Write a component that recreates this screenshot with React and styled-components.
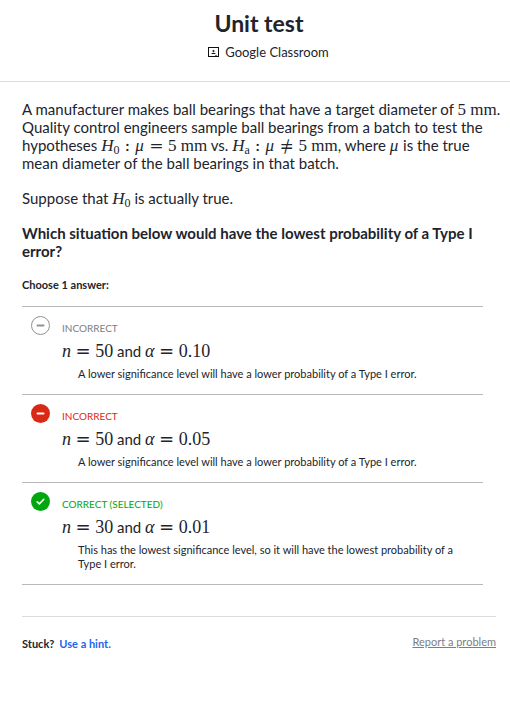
import React from "react";
import styled, { createGlobalStyle, css } from "styled-components";

const GlobalStyle = createGlobalStyle`
  *, *::before, *::after { box-sizing: border-box; }
  body {
    margin: 0;
    background: #fff;
    color: #21242c;
    font-family: Lato, "Noto Sans", sans-serif;
    font-size: 15px;
    line-height: 18px;
  }
`;

const Header = styled.header`
  display: flex;
  flex-direction: column;
  align-items: center;
  gap: 5px;
  padding: 9px 0 20px 8px;
  border-bottom: 1px solid #dbdcdd;
`;

const Title = styled.h1`
  margin: 0;
  font-size: 23px;
  line-height: 29px;
  font-weight: 700;
`;

const ClassroomButton = styled.button`
  display: flex;
  align-items: center;
  gap: 6px;
  padding: 0 0 0 19px;
  border: 0;
  background: none;
  color: #21242c;
  font: inherit;
  font-size: 13px;
  line-height: 18px;
  cursor: pointer;
`;

const Main = styled.main`
  padding: 18px 14px 40px 22px;
`;

const Prose = styled.section`
  margin-right: -8px;
`;

const Paragraph = styled.p`
  margin: 0 0 17px;
  font-weight: ${(p) => (p.$strong ? 700 : 400)};
`;

const MathText = styled.span`
  font-family: "Liberation Serif", serif;
  font-size: ${(p) => (p.$large ? 18 : 17)}px;
  line-height: 0;
  white-space: nowrap;
`;

const Variable = styled.i`
  padding-right: 1px;
`;

const Subscript = styled.sub`
  font-size: 12px;
  line-height: 0;
  vertical-align: -3px;
`;

const Relation = styled.span`
  padding: 0 5px;
  font-family: "DejaVu Math TeX Gyre", "DejaVu Serif", serif;
`;

const Answers = styled.fieldset`
  margin: 0 13px 0 0;
  padding: 0;
  border: 0;
  min-width: 0;
`;

const Legend = styled.legend`
  padding: 0;
  margin-bottom: 13px;
  font-size: 11px;
  line-height: 16px;
  font-weight: 700;
`;

const AnswerList = styled.ul`
  margin: 0;
  padding: 0;
  list-style: none;
  border-top: 1px solid #b8b9bb;
`;

const AnswerItem = styled.li`
  border-bottom: 1px solid #b8b9bb;
`;

const AnswerLabel = styled.label`
  display: grid;
  grid-template-columns: 19px 1fr;
  column-gap: 12px;
  padding: 9px 8px 13px 9px;
`;

const Marker = styled.span`
  display: grid;
  width: 19px;
  height: 19px;

  > * {
    grid-area: 1 / 1;
  }
`;

const Radio = styled.input`
  appearance: none;
  width: 19px;
  height: 19px;
  margin: 0;
  border-radius: 50%;
  ${(p) =>
    p.$tone === "neutral"
      ? css`
          border: 1px solid #909296;
        `
      : css`
          background: ${p.$tone === "wrong" ? "#d92916" : "#00a60e"};
        `}
`;

const MarkerIcon = styled.svg`
  width: 19px;
  height: 19px;
  pointer-events: none;
`;

const AnswerBody = styled.span`
  display: block;
  padding-top: 4px;
`;

const toneColor = { neutral: "#7b7e84", wrong: "#d92916", right: "#00a60e" };

const Verdict = styled.span`
  display: block;
  font-size: 10px;
  line-height: 16px;
  text-transform: uppercase;
  color: ${(p) => toneColor[p.$tone]};
`;

const Statement = styled.span`
  display: block;
  margin-top: 5px;
  line-height: 20px;
`;

const Rationale = styled.span`
  display: block;
  margin-top: 6px;
  padding: 0 10px 0 16px;
  font-size: 11px;
  line-height: 14px;
`;

const Footer = styled.footer`
  display: flex;
  justify-content: space-between;
  align-items: flex-start;
  margin-top: 31px;
  padding-top: 16px;
  border-top: 1px solid #dbdcdd;
  font-size: 11px;
`;

const Hint = styled.div`
  display: flex;
  gap: 5px;
  padding-top: 2px;
  font-weight: 700;
`;

const HintButton = styled.button`
  padding: 0;
  border: 0;
  background: none;
  color: #1865f2;
  font: inherit;
  cursor: pointer;
`;

const ReportLink = styled.a`
  color: #7b7e84;
  text-decoration: underline;
`;

const answers = [
  {
    tone: "neutral",
    verdict: "Incorrect",
    n: "50",
    alpha: "0.10",
    why: "A lower significance level will have a lower probability of a Type I error.",
  },
  {
    tone: "wrong",
    verdict: "Incorrect",
    n: "50",
    alpha: "0.05",
    why: "A lower significance level will have a lower probability of a Type I error.",
  },
  {
    tone: "right",
    verdict: "Correct (selected)",
    n: "30",
    alpha: "0.01",
    why: "This has the lowest significance level, so it will have the lowest probability of a Type I error.",
  },
];

function Hypothesis({ sub }) {
  return (
    <>
      <i>H</i>
      <Subscript>{sub}</Subscript>
    </>
  );
}

function Equation({ name, value }) {
  return (
    <MathText $large>
      <i>{name}</i>
      <Relation>=</Relation>
      {value}
    </MathText>
  );
}

function ClassroomIcon() {
  return (
    <svg width="11" height="10" viewBox="0 0 11 10" aria-hidden="true">
      <rect x="0.5" y="0.5" width="10" height="9" fill="none" stroke="#111" />
      <circle cx="5.5" cy="4" r="1" fill="#111" />
      <path d="M3 7Q5.500 4.400 8 7Z" fill="#111" />
      <path d="M7 8.500H9" stroke="#777" />
    </svg>
  );
}

function Answer({ answer, index }) {
  const { tone, verdict, n, alpha, why } = answer;
  return (
    <AnswerItem>
      <AnswerLabel>
        <Marker>
          <Radio
            type="radio"
            name="answer"
            value={index}
            defaultChecked={tone === "right"}
            $tone={tone}
          />
          <MarkerIcon viewBox="0 0 20 20" fill="none" aria-hidden="true">
            <path
              d={tone === "right" ? "M6.500 10.400L8.800 12.500L13.500 7.700" : "M6.800 10H13.200"}
              stroke={tone === "neutral" ? "#909296" : "#fff"}
              strokeWidth={tone === "right" ? 1.6 : 2}
              strokeLinecap="round"
              strokeLinejoin="round"
            />
          </MarkerIcon>
        </Marker>
        <AnswerBody>
          <Verdict $tone={tone}>{verdict}</Verdict>
          <Statement>
            <Equation name="n" value={n} /> and <Equation name="α" value={alpha} />
          </Statement>
          <Rationale>{why}</Rationale>
        </AnswerBody>
      </AnswerLabel>
    </AnswerItem>
  );
}

export default function App() {
  return (
    <>
      <GlobalStyle />
      <Header>
        <Title>Unit test</Title>
        <ClassroomButton type="button">
          <ClassroomIcon />
          Google Classroom
        </ClassroomButton>
      </Header>
      <Main>
        <Prose>
          <Paragraph>
            A manufacturer makes ball bearings that have a target diameter of{" "}
            <MathText>5 mm</MathText>. Quality control engineers sample ball bearings from
            a batch to test the hypotheses{" "}
            <MathText>
              <Hypothesis sub="0" />
              <Relation>:</Relation>
              <Variable>μ</Variable>
              <Relation>=</Relation>5 mm
            </MathText>{" "}
            vs.{" "}
            <MathText>
              <Hypothesis sub="a" />
              <Relation>:</Relation>
              <Variable>μ</Variable>
              <Relation>≠</Relation>5 mm
            </MathText>
            , where{" "}
            <MathText>
              <Variable>μ</Variable>
            </MathText>{" "}
            is the true mean diameter of the ball bearings in that batch.
          </Paragraph>
          <Paragraph>
            Suppose that{" "}
            <MathText>
              <Hypothesis sub="0" />
            </MathText>{" "}
            is actually true.
          </Paragraph>
          <Paragraph $strong>
            Which situation below would have the lowest probability of a Type I error?
          </Paragraph>
        </Prose>
        <Answers>
          <Legend>Choose 1 answer:</Legend>
          <AnswerList>
            {answers.map((answer, i) => (
              <Answer key={i} answer={answer} index={i} />
            ))}
          </AnswerList>
        </Answers>
        <Footer>
          <Hint>
            <span>Stuck?</span>
            <HintButton type="button">Use a hint.</HintButton>
          </Hint>
          <ReportLink href="#report">Report a problem</ReportLink>
        </Footer>
      </Main>
    </>
  );
}
